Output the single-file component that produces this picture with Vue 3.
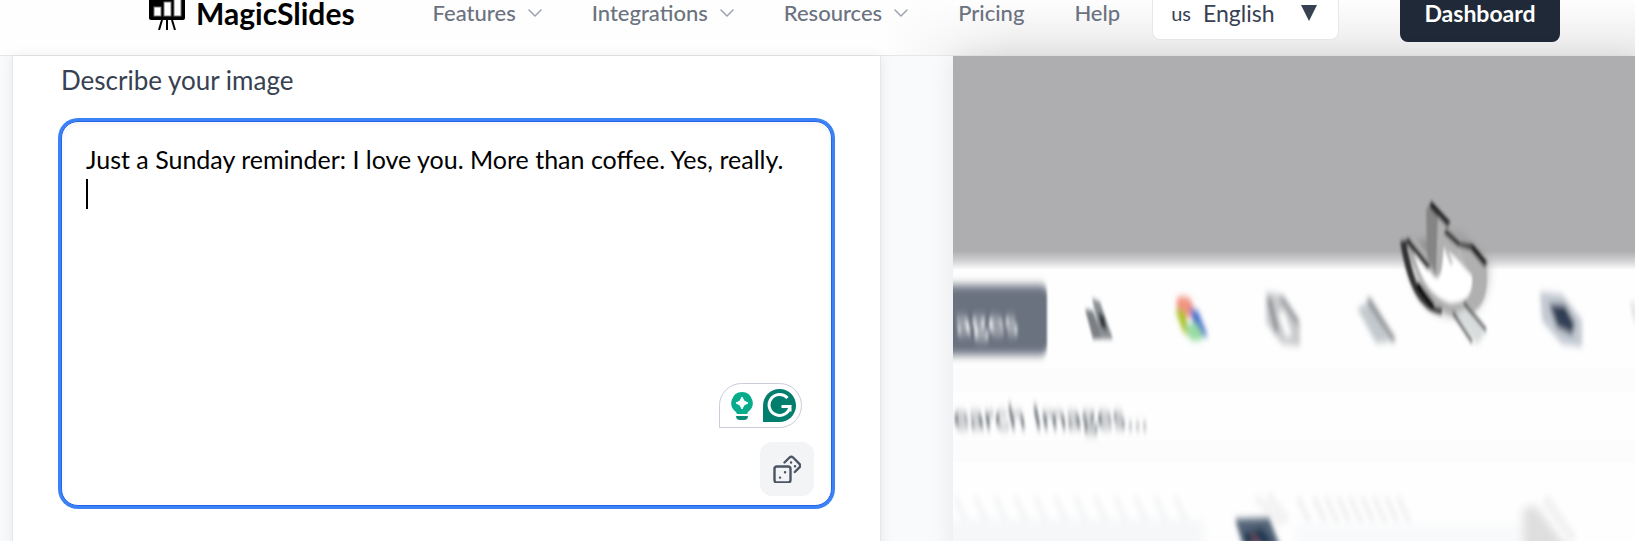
<template>
  <div class="page">
    <header class="header">
      <a class="logo" href="#">
        <svg width="36" height="34" viewBox="0 0 36 34">
          <rect x="0" y="0" width="36" height="24" rx="2" fill="#000"/>
          <g fill="#fff" stroke="#777" stroke-width="1">
            <rect x="5" y="11" width="7" height="9"/>
            <rect x="15" y="6" width="7" height="14"/>
            <rect x="25" y="1" width="7" height="19"/>
          </g>
          <path d="M13 24L10 34M18 24v10M23 24l3 10" fill="none" stroke="#000" stroke-width="2"/>
        </svg>
        <span>MagicSlides</span>
      </a>

      <nav class="nav">
        <a v-for="item in navItems" :key="item.label" href="#">
          {{ item.label }}
          <svg v-if="item.menu" width="14" height="10" viewBox="0 0 14 10" fill="none" stroke="#9ca3af" stroke-width="1.500" stroke-linecap="round" stroke-linejoin="round">
            <path d="M1 2l6 6 6-6"/>
          </svg>
        </a>
      </nav>

      <div class="language">
        <label for="language">us</label>
        <select id="language" v-model="language">
          <option>English</option>
        </select>
        <svg width="16" height="16" viewBox="0 0 16 16"><path d="M0 0h16L8 16z" fill="#374151"/></svg>
      </div>

      <button class="dashboard" type="button">Dashboard</button>
    </header>

    <main class="content">
      <section class="card">
        <label class="field-label" for="prompt">Describe your image</label>
        <div class="field">
          <textarea id="prompt" v-model="prompt" spellcheck="false"></textarea>
          <span class="caret"></span>
          <div class="assistant">
            <svg width="24" height="30" viewBox="0 0 24 30">
              <path d="M12 1a11 11 0 0 0-6 20l1 2h10l1-2a11 11 0 0 0-6-20z" fill="#08ac8d"/>
              <path d="M12 6l2 4 4 2-4 2-2 4-2-4-4-2 4-2z" fill="#fff" stroke="#fff" stroke-linejoin="round"/>
              <path d="M6 25h12c0 3-2 4-4 4h-4c-2 0-4-1-4-4z" fill="#078b76"/>
            </svg>
            <svg width="33" height="33" viewBox="0 0 33 33">
              <path d="M0 33V16.5A16.5 16.5 0 1 1 16.5 33z" fill="#027e6f"/>
              <path d="M24.5 9A10.5 10.5 0 1 0 27 17.500H18.500M27 17.500v5" fill="none" stroke="#fff" stroke-width="3"/>
            </svg>
          </div>
          <button class="dice" type="button" aria-label="Random prompt">
            <svg width="28" height="28" viewBox="0 0 28 28" fill="none" stroke="#4b5563" stroke-width="2.400" stroke-linecap="round" stroke-linejoin="round">
              <rect x="1.500" y="11.500" width="16" height="16" rx="2.500"/>
              <path d="M11.500 7.500l5-5a2.600 2.600 0 0 1 3.600 0l6.300 6.300a2.600 2.600 0 0 1 0 3.600l-4.600 4.600"/>
              <path d="M7 22.600h.1M12 17.200h.1M18 7.500h.1M22 11.300h.1"/>
            </svg>
          </button>
        </div>
      </section>

      <section class="preview">
        <svg width="682" height="485" viewBox="953 56 682 485">
          <defs>
            <filter id="soft" x="-50%" y="-50%" width="200%" height="200%"><feGaussianBlur stdDeviation="2 3.500"/></filter>
            <filter id="ink" x="-50%" y="-50%" width="200%" height="200%"><feGaussianBlur stdDeviation="1.300 2.500"/></filter>
            <filter id="smear" x="-50%" y="-50%" width="200%" height="200%"><feGaussianBlur stdDeviation="0.800 5"/></filter>
            <filter id="haze" x="-50%" y="-50%" width="200%" height="200%"><feGaussianBlur stdDeviation="5"/></filter>
            <linearGradient id="edge" x1="0" y1="0" x2="0" y2="1">
              <stop offset="0" stop-color="#aeaeb0"/>
              <stop offset="0.500" stop-color="#d0d0d2"/>
              <stop offset="1" stop-color="#fefefe"/>
            </linearGradient>
          </defs>
          <rect x="953" y="56" width="682" height="485" fill="#fefefe"/>
          <rect x="953" y="56" width="682" height="196" fill="#aeaeb0"/>
          <rect x="953" y="251" width="682" height="19" fill="url(#edge)"/>
          <rect x="953" y="368" width="682" height="24" fill="#fcfcfd"/>
          <rect x="953" y="440" width="682" height="22" fill="#fcfcfd"/>

          <rect x="930" y="285" width="117" height="70" rx="8" fill="#6b7280" filter="url(#smear)"/>
          <g filter="url(#smear)">
            <text class="blurred tab" x="957" y="334" fill="#fff" transform="skewX(12)" transform-origin="957 334">ages</text>
          </g>

          <g filter="url(#ink)">
            <path d="M1085 309l8 2 10 28h-10z" fill="#7a7f84"/>
            <path d="M1092 298l8 4 13 37h-12z" fill="#8b9094"/>
            <path d="M1098 312l6 4 3 15-6-4z" fill="#35393d"/>
          </g>

          <g filter="url(#soft)">
            <path d="M1176 300q6-7 15 0l6 18-18-2z" fill="#f2937f"/>
            <path d="M1175 309l9 2 8 28-9-8z" fill="#a9c321"/>
            <path d="M1189 308l9 3 10 26-11-3z" fill="#4a72cb"/>
            <path d="M1185 324l12 0 7 13q-6 6-14 2z" fill="#96dba2"/>
          </g>

          <g filter="url(#soft)">
            <path d="M1266 292l16 3 18 27v24l-18-2-16-21z" fill="#c9cbcd"/>
            <path d="M1269 298l8 34M1281 297l17 26" stroke="#808488" stroke-width="4" fill="none"/>
            <path d="M1281 312l8 24" stroke="#fff" stroke-width="6"/>
          </g>

          <g filter="url(#soft)">
            <path d="M1357 308l13-6 20 40-14 1z" fill="#c3c9ce"/>
            <path d="M1368 299l26 42" stroke="#6a6f74" stroke-width="4" fill="none"/>
          </g>

          <g filter="url(#soft)">
            <path d="M1540 292l22 2 20 26v27l-20-3-20-23z" fill="#c3c9d2"/>
            <path d="M1549 304l16 1 10 19-3 11-15-8z" fill="#2a3850"/>
          </g>
          <path d="M1551 308l22 25" stroke="#8793a7" stroke-width="1" filter="url(#smear)"/>
          <path d="M1632 302l5 20" stroke="#dadddf" stroke-width="4" filter="url(#soft)"/>

          <!-- hand cursor -->
          <path d="M1406 244c6 43 20 70 47 73 30 2 36-29 35-55l-30-30z" fill="#777" opacity="0.500" filter="url(#haze)"/>
          <g filter="url(#ink)">
            <path d="M1425 207q5-7 12 2l13 20 18 14 18 22q6 50-28 50-22-2-34-26l-19-48 9-4 18 23z" fill="#b0b0b0"/>
            <path d="M1412 248l22 29q6 4 8-9l2-20 12 10 16 18q2 28-22 27-21-7-31-34z" fill="#fff"/>
            <path d="M1426 207l1 50 9 18 2-62z" fill="#858585"/>
            <path d="M1403 241c5 30 12 52 23 62q6 7 16 8" stroke="#333" stroke-width="6" fill="none"/>
            <path d="M1407 240l22 28" stroke="#111" stroke-width="5" fill="none"/>
            <path d="M1417 284l16 22M1430 204l19 21M1445 231l15 14M1460 244l12 4 14 17" stroke="#000" stroke-width="5" fill="none"/>
            <path d="M1446 250l6 14M1457 248l8 19" stroke="#bbb" stroke-width="3" fill="none"/>
          </g>
          <path d="M1455 315l13-9 18 26-9 13z" fill="#d8dcdd" filter="url(#soft)"/>
          <path d="M1453 313l19 29M1464 303l22 27" stroke="#333" stroke-width="2" fill="none" filter="url(#ink)"/>

          <g filter="url(#smear)">
            <text class="blurred" x="955" y="428" fill="#6b7177" transform="skewX(12)" transform-origin="955 428">earch Images...</text>
          </g>

          <rect x="930" y="520" width="274" height="60" rx="6" fill="#f5f7f9" filter="url(#haze)"/>
          <path d="M955 497l12 26m8-26 12 26m8-26 12 26m8-26 12 26m8-26 12 26m8-26 12 26m8-26 12 26m8-26 12 26m8-26 12 26m8-26 12 26m8-26 12 26m8-26 12 26" fill="none" stroke="#f4f5f6" stroke-width="6" filter="url(#soft)"/>
          <path d="M1298 497l12 27m4-27 12 27m0-27 12 27m0-27 12 27m0-27 12 27m0-27 12 27m0-27 12 27m0-27 12 27m0-27 12 27" fill="none" stroke="#f0f0f2" stroke-width="5" filter="url(#soft)"/>
          <rect x="1295" y="525" width="225" height="40" fill="#f8f9fb" filter="url(#haze)"/>
          <path d="M1256 497l26 28M1268 495l20 26" stroke="#f3f3f4" stroke-width="8" filter="url(#soft)"/>
          <g filter="url(#soft)">
            <path d="M1235 519l34-1 11 28h-37z" fill="#536477"/>
            <path d="M1243 533l19-5 14 18h-29z" fill="#1d3951"/>
            <path d="M1251 534l9 10" stroke="#754c5c" stroke-width="4"/>
          </g>
          <path d="M1523 509l12-4 38 50-50-2z" fill="#dededf" filter="url(#haze)"/>
          <path d="M1545 498l28 42" stroke="#f2f2f2" stroke-width="10" filter="url(#soft)"/>
        </svg>
      </section>
    </main>
  </div>
</template>

<script setup>
import { ref } from 'vue'

const navItems = [
  { label: 'Features', menu: true },
  { label: 'Integrations', menu: true },
  { label: 'Resources', menu: true },
  { label: 'Pricing' },
  { label: 'Help' }
]

const language = ref('English')
const prompt = ref('Just a Sunday reminder: I love you. More than coffee. Yes, really.\n')
</script>

<style>
body {
  background: #f8fafc;
  overflow: hidden;
}
</style>

<style scoped>
.page {
  font-family: Lato, "Liberation Sans", sans-serif;
  color: #374151;
}

/* top of the bar is scrolled out of view */
.header {
  display: flex;
  align-items: center;
  box-sizing: border-box;
  height: 84px;
  margin-top: -28px;
  padding: 0 75px 2px 149px;
  border-bottom: 1px solid #e5e7eb;
  background: linear-gradient(90deg, #fefefe 54%, rgba(254, 254, 254, 0) 62%), linear-gradient(#fff 30%, #eaeaea);
}

.header a {
  text-decoration: none;
}

.logo {
  display: flex;
  align-items: center;
  gap: 11px;
  color: #000;
  font-size: 30px;
  font-weight: 700;
}

.nav {
  display: flex;
  gap: 50px;
  margin-left: 78px;
}

.nav a {
  display: flex;
  align-items: center;
  gap: 12px;
  color: #6b7280;
  font-size: 22px;
  font-weight: 500;
}

.language {
  display: flex;
  align-items: center;
  box-sizing: border-box;
  width: 187px;
  height: 54px;
  margin-left: 32px;
  padding: 0 21px 0 18px;
  gap: 12px;
  border: 1px solid #e5e7eb;
  border-radius: 8px;
  background: #fff;
  font-size: 20px;
}

.language select {
  flex: 1;
  min-width: 0;
  padding: 0;
  border: 0;
  appearance: none;
  background: none;
  color: inherit;
  font: inherit;
  font-size: 23px;
}

.dashboard {
  width: 160px;
  height: 58px;
  margin-left: auto;
  border: 0;
  border-radius: 8px;
  background: #1f2937;
  color: #fff;
  font: inherit;
  font-size: 23px;
  font-weight: 700;
}

.content {
  display: grid;
  grid-template-columns: 869fr 682fr;
  gap: 72px;
  padding-left: 12px;
}

.card {
  padding: 8px 48px 48px;
  border: 1px solid #e5e7eb;
  border-width: 0 1px;
  background: #fff;
  box-shadow: 0 0 12px rgba(0, 0, 0, 0.08);
}

.field-label {
  display: block;
  margin-bottom: 25px;
  font-size: 26px;
  line-height: 32px;
}

.field {
  position: relative;
}

.field textarea {
  display: block;
  box-sizing: border-box;
  width: 100%;
  height: 385px;
  padding: 20px 24px;
  border: 1px solid #2563eb;
  border-radius: 17px;
  outline: none;
  box-shadow: 0 0 0 3px #3b82f6, inset 0 2px 6px rgba(0, 0, 0, 0.05);
  resize: none;
  color: #000;
  font: inherit;
  font-size: 25px;
  line-height: 35px;
}

.caret {
  position: absolute;
  top: 58px;
  left: 25px;
  width: 2px;
  height: 30px;
  background: #000;
}

.assistant {
  position: absolute;
  right: 30px;
  bottom: 78px;
  display: flex;
  align-items: center;
  justify-content: space-between;
  box-sizing: border-box;
  width: 83px;
  height: 45px;
  padding: 0 5px 0 10px;
  border: 1px solid #c9ccda;
  border-radius: 23px 23px 23px 0;
  background: #fff;
}

.dice {
  position: absolute;
  right: 18px;
  bottom: 10px;
  display: flex;
  align-items: center;
  justify-content: center;
  width: 54px;
  height: 54px;
  padding: 0;
  border: 0;
  border-radius: 12px;
  background: #f3f4f6;
}

.preview {
  min-width: 0;
  overflow: hidden;
  box-shadow: 0 0 24px rgba(0, 0, 0, 0.08);
}

.preview svg {
  display: block;
  width: 100%;
  height: auto;
}

.blurred {
  font-size: 30px;
  font-weight: 500;
}

.tab {
  font-size: 32px;
}
</style>
